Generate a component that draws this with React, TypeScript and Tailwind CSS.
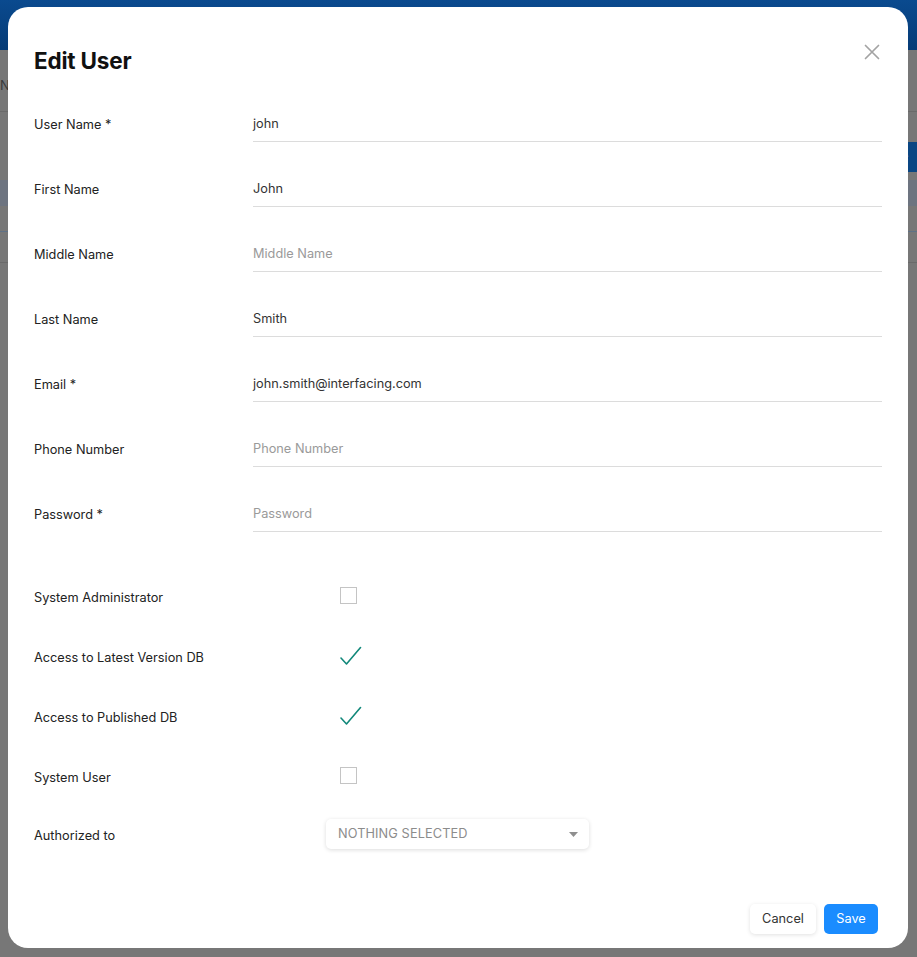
import React from 'react';

const font = { fontFamily: 'Inter, "Noto Sans", sans-serif' };

const FIELDS = [
  { label: 'User Name *', value: 'john', placeholder: 'User Name' },
  { label: 'First Name', value: 'John', placeholder: 'First Name' },
  { label: 'Middle Name', value: '', placeholder: 'Middle Name' },
  { label: 'Last Name', value: 'Smith', placeholder: 'Last Name' },
  { label: 'Email *', value: 'john.smith@interfacing.com', placeholder: 'Email' },
  { label: 'Phone Number', value: '', placeholder: 'Phone Number' },
  { label: 'Password *', value: '', placeholder: 'Password' },
];

const FLAGS = [
  { label: 'System Administrator', checked: false },
  { label: 'Access to Latest Version DB', checked: true },
  { label: 'Access to Published DB', checked: true },
  { label: 'System User', checked: false },
];

const Check: React.FC<{ checked: boolean }> = ({ checked }) =>
  checked ? (
    <svg width="22" height="20" viewBox="0 0 22 20" className="ml-[14px] -mt-[5px]">
      <path d="M1 12 L6.5 18 L20.5 1.5" fill="none" stroke="#12887a" strokeWidth="1.6" strokeLinecap="round" strokeLinejoin="round" />
    </svg>
  ) : (
    <div className="ml-[14px] -mt-[5px] w-[17px] h-[17px] border border-[#c4c4c4] bg-white" />
  );

export default function App() {
  return (
    <div className="relative w-full h-screen bg-[#777777] overflow-hidden" style={font}>
      {/* dimmed page behind */}
      <div className="h-[50px] bg-gradient-to-b from-[#0a4a8f] to-[#063b76]" />
      <div className="h-[62px] border-b border-[#6a6a6a] flex items-center pt-[10px]">
        <span className="text-[13px] text-[#3a3a3a]">NT</span>
      </div>
      <div className="h-[68px] flex justify-end items-start pt-[30px]">
        <div className="w-[34px] h-[30px] bg-[#0a4683] text-[#8da6c4] text-[13px] flex items-center pl-[18px]">e</div>
      </div>
      <div className="h-[26px] bg-[#6d7480]" />
      <div className="h-[26px] border-b border-[#5f7186]" />
      <div className="h-[31px] border-b border-[#6a6a6a] flex justify-end items-center">
        <span className="text-[13px] text-[#2e2e2e] w-[34px]">pir</span>
      </div>

      {/* modal */}
      <div className="absolute left-[8px] top-[7px] w-[900px] h-[941px] bg-white rounded-[20px] flex flex-col pl-[26px] pr-[26px] pt-[39px] pb-[14px]">
        <button className="absolute right-[28px] top-[37px]">
          <svg width="16" height="16" viewBox="0 0 16 16">
            <path d="M1.5 1.5 L14.5 14.5 M14.5 1.5 L1.5 14.5" stroke="#a3a3a3" strokeWidth="1.7" strokeLinecap="round" />
          </svg>
        </button>

        <h2 className="text-[22.5px] leading-[30px] font-bold text-[#111] tracking-[-0.2px]">Edit User</h2>

        <div className="mt-[32px] flex flex-col gap-[31px]">
          {FIELDS.map((f) => (
            <div key={f.label} className="grid grid-cols-[219px_1fr] items-center">
              <span className="text-[12.75px] text-[#222]">{f.label}</span>
              <div className="h-[34px] border-b border-[#dcdcdc] flex items-center pb-[1px]">
                {f.value ? (
                  <span className="text-[12.75px] text-[#333]">{f.value}</span>
                ) : (
                  <span className="text-[12.75px] text-[#9a9a9a]">{f.placeholder}</span>
                )}
              </div>
            </div>
          ))}
        </div>

        <div className="mt-[36px] flex flex-col">
          {FLAGS.map((f) => (
            <div key={f.label} className="h-[60px] grid grid-cols-[292px_1fr] items-center">
              <span className="text-[12.75px] text-[#222]">{f.label}</span>
              <div className="flex items-center">
                <Check checked={f.checked} />
              </div>
            </div>
          ))}
          <div className="h-[56px] grid grid-cols-[292px_1fr] items-center">
            <span className="text-[12.75px] text-[#222]">Authorized to</span>
            <div className="w-[263px] h-[30px] mb-[4px] rounded-[5px] bg-white shadow-[0_1px_4px_rgba(0,0,0,0.14)] flex items-center justify-between pl-[12px] pr-[11px]">
              <span className="text-[12.75px] text-[#8c8c8c] tracking-[0.1px]">NOTHING SELECTED</span>
              <svg width="9" height="5" viewBox="0 0 9 5">
                <path d="M0 0 L9 0 L4.5 5 Z" fill="#8f8f8f" />
              </svg>
            </div>
          </div>
        </div>

        <div className="mt-auto flex justify-end gap-[8px] pr-[4px]">
          <button className="h-[30px] w-[66px] rounded-[5px] bg-white shadow-[0_1px_4px_rgba(0,0,0,0.12)] text-[12.75px] text-[#333]">Cancel</button>
          <button className="h-[30px] w-[54px] rounded-[5px] bg-[#1a8cff] text-[12.75px] text-white">Save</button>
        </div>
      </div>
    </div>
  );
}
